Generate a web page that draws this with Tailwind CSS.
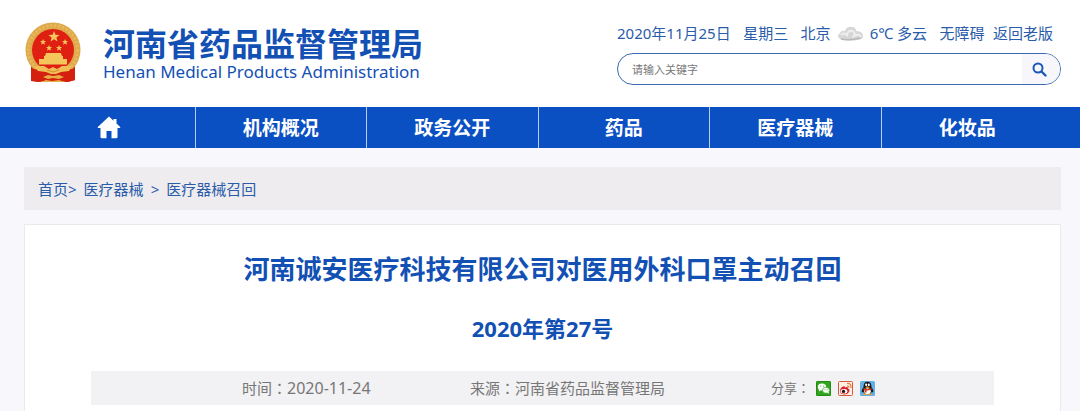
<!DOCTYPE html>
<html lang="zh-CN">
<head>
<meta charset="utf-8">
<meta name="viewport" content="width=device-width, initial-scale=1">
<title>河南省药品监督管理局</title>
<script src="https://cdn.jsdelivr.net/npm/@tailwindcss/browser@4"></script>
</head>
<body class="min-h-screen bg-[#f8f7fb] font-['Noto_Sans','Noto_Sans_CJK_SC',sans-serif] text-[15px] leading-5 text-[#2a5caa]">
<header class="flex items-start justify-between bg-white pl-6 pr-[19px] pb-[22px] pt-[22px]">
  <a href="#" class="flex items-start gap-[22px] text-[#1250b4]">
    <svg class="h-[62px] w-[57px]" viewBox="0 0 57 62" role="img" aria-label="国徽">
      <path d="M7 43 L7 59 L14 60 L22 59 L28 60 L35 59 L43 60 L51 58 L51 43Z" fill="#d3200f"/>
      <path d="M11 48l1 10M46 48l-1 10M15 50l0 9M43 50l0 9" stroke="#b3170a" stroke-width="1"/>
      <circle cx="29" cy="28" r="27.500" fill="#dfaa4c"/>
      <circle cx="29" cy="28" r="24.500" fill="none" stroke="#e8b95c" stroke-width="3" stroke-dasharray="2 2"/>
      <circle cx="29" cy="28" r="21" fill="#df1f12"/>
      <path d="M7 46q5 2 12 2h20q7 0 12-2v12l-7 2-8-1H22l-8 1-7-2z" fill="#d3200f"/>
      <g fill="#f3c55b">
        <path d="M30 9l1.500 3.800 4 .2-3.100 2.500 1.100 4-3.500-2.200-3.400 2.200 1-4-3.200-2.500 4.200-.2z"/>
        <path d="M19 17l.9 2 2.100.1-1.600 1.400.6 2.200-2-1.200-1.900 1.200.6-2.200-1.700-1.400 2.200-.1z"/>
        <path d="M41 17l.9 2 2.100.1-1.600 1.400.6 2.200-2-1.200-1.900 1.200.6-2.200-1.700-1.400 2.200-.1z"/>
        <path d="M25 23l.9 2 2.100.1-1.600 1.400.6 2.200-2-1.200-1.900 1.200.6-2.200-1.700-1.400 2.200-.1z"/>
        <path d="M35 23l.9 2 2.100.1-1.600 1.400.6 2.200-2-1.200-1.900 1.200.6-2.200-1.700-1.400 2.200-.1z"/>
        <path d="M22 31h15l1 3h-17zM20 34h19v3h-19zM15 37h28v5.500h-28z"/>
      </g>
      <path d="M10 44l10 0 5 3 4-2 4 2 5-3h10l-3 5-8 1-5 2h-5l-5-2-8-1z" fill="#f0bd57"/>
      <path d="M19 55l5-2 5 1 6-1 5 2-5 2-6-1-5 1zM17 60l5-2 6 1 7-1 6 2z" fill="#e8ae45"/>
      <path d="M23 48l6 2 6-2" fill="none" stroke="#d0902f"/>
    </svg>
    <span class="flex flex-col pt-[5px]">
      <span class="font-['Liberation_Sans','Noto_Sans_CJK_SC',sans-serif] text-[32px] font-bold leading-9">河南省药品监督管理局</span>
      <span class="text-[17px] leading-[18px]">Henan Medical Products Administration</span>
    </span>
  </a>
  <div class="flex w-[444px] flex-col gap-[10px]">
    <div class="flex items-center justify-between pr-2 pt-px">
      <span>2020年11月25日</span>
      <span>星期三</span>
      <span class="flex items-center gap-[6px]">
        <span>北京</span>
        <svg class="h-[15px] w-[27px]" viewBox="0 0 27 15" aria-hidden="true">
          <path d="M3 13q-4-3 0-6Q4 4 8 5q2-5 7-4 4 0 4 4 6 0 7 4 1 4-5 5Q10 16 3 13z" fill="#d7d7d7"/>
          <path d="M4 9q3-3 6 0 1-5 5-4t2 5q5-3 7 1" fill="none" stroke="#efefef" stroke-width="2"/>
          <path d="M4 13q8 2 20-1" fill="none" stroke="#b9b9b9" stroke-width="1.500"/>
        </svg>
        <span>6℃ 多云</span>
      </span>
      <a href="#">无障碍</a>
      <a href="#" class="-ml-1">返回老版</a>
    </div>
    <form class="flex h-8 overflow-hidden rounded-full border border-[#3a6ab4] bg-white">
      <input type="text" aria-label="搜索" placeholder="请输入关键字" class="h-full min-w-0 flex-1 bg-transparent pl-[14px] text-[11px] leading-5 outline-none placeholder:text-[#777777]">
      <button type="button" aria-label="搜索" class="flex w-[38px] items-center bg-[#f7f7fb] pl-[10px] text-[#1d56b3]">
        <svg class="size-[15px]" viewBox="0 0 15 15" fill="none" stroke="currentColor"><circle cx="6" cy="6" r="4.500" stroke-width="2"/><path d="M9.500 9.500l4 4" stroke-width="2.400" stroke-linecap="round"/></svg>
      </button>
    </form>
  </div>
</header>
<nav class="bg-[#0b50c2] pl-6 pr-[27px] text-[19px] font-bold text-white">
  <div class="grid h-[41px] grid-cols-6 divide-x divide-[#b5cdf4]">
    <a href="#" aria-label="首页" class="flex items-center justify-center"><svg class="h-[23px] w-6" viewBox="0 0 24 23" fill="currentColor"><path d="M12 0.500L0.800 11q-.5 1 .6 1H3.500v9q0 1.300 1.300 1.300H9.500V15h5v7.300h4.700q1.300 0 1.300-1.300V12h2.100q1.100 0 .6-1L19.500 7.500V3h-3v1.800z"/></svg></a>
    <a href="#" class="flex items-center justify-center">机构概况</a>
    <a href="#" class="flex items-center justify-center">政务公开</a>
    <a href="#" class="flex items-center justify-center">药品</a>
    <a href="#" class="flex items-center justify-center">医疗器械</a>
    <a href="#" class="flex items-center justify-center">化妆品</a>
  </div>
</nav>
<main class="flex flex-col gap-[14px] pl-6 pr-[19px] pt-[19px]">
  <div class="flex h-[43px] items-center gap-[7px] bg-[#eeecef] px-[14px]">
    <span><a href="#">首页</a>&gt;</span>
    <a href="#">医疗器械</a>
    <span>&gt;</span>
    <a href="#">医疗器械召回</a>
  </div>
  <article class="border border-b-0 border-[#eae9ee] bg-white px-[66px] pb-[7px] pt-[28px]">
    <h1 class="text-center text-[26px] font-bold leading-8 text-[#1250b4]">河南诚安医疗科技有限公司对医用外科口罩主动召回</h1>
    <p class="mt-[29px] text-center text-[22px] font-bold leading-7 text-[#1250b4]">2020年第27号</p>
    <div class="mt-[29px] flex h-[34px] items-center bg-[#f2f1f3] pl-[151px] text-[#777777]">
      <span class="w-[228px]">时间<span lang="zh-TW" class="font-['Noto_Sans_CJK_TC']">：</span><span class="text-[16px]">2020-11-24</span></span>
      <span class="w-[301px]">来源<span lang="zh-TW" class="font-['Noto_Sans_CJK_TC']">：</span>河南省药品监督管理局</span>
      <span class="flex items-center gap-[7px]">
        <span class="w-[38px] whitespace-nowrap text-[13px]">分享<span lang="zh-TW" class="font-['Noto_Sans_CJK_TC']">：</span></span>
        <button type="button" aria-label="微信"><svg class="size-[15px]" viewBox="0 0 15 15"><rect width="15" height="15" rx="1.500" fill="#2fa51e"/><rect x=".5" y=".5" width="14" height="14" rx="1" fill="none" stroke="#258b17"/><ellipse cx="6" cy="6" rx="4.200" ry="3.500" fill="#fff"/><path d="M3 8l0 2.500 2-1.500z" fill="#fff"/><ellipse cx="10" cy="9.300" rx="3.500" ry="3" fill="#fff" stroke="#2fa51e" stroke-width=".7"/><path d="M11 11.500l2 1.300-.4-2z" fill="#fff"/><g fill="#2fa51e"><circle cx="4.600" cy="5" r=".6"/><circle cx="7.400" cy="5" r=".6"/><circle cx="9" cy="8.700" r=".5"/><circle cx="11.200" cy="8.700" r=".5"/></g></svg></button>
        <button type="button" aria-label="微博"><svg class="size-[15px]" viewBox="0 0 15 15"><rect x=".5" y=".5" width="14" height="14" rx="1" fill="#fff0e6" stroke="#d8593a"/><path d="M2 10Q2 7 5 5.500q2-.8 2 .9 3-1 3 1 2 .6 1.500 2.600Q10 13.500 6 13.500 2 13 2 10z" fill="#d9232b"/><ellipse cx="6" cy="10.200" rx="3.300" ry="2.300" fill="#fff"/><circle cx="5.500" cy="10.400" r="1.700" fill="#221818"/><path d="M9 2.500q4.500-.5 4 4.500M9 4.800q2.200 0 2 2" fill="none" stroke="#ec7b34" stroke-width="1.200"/></svg></button>
        <button type="button" aria-label="QQ"><svg class="size-[15px]" viewBox="0 0 15 15"><rect width="15" height="15" rx="1.500" fill="#62b0e5"/><path d="M3.500 6Q3.500.8 7.500.8T11.500 6q2.500 3.500 1.500 5.500l-1.300-.8Q11 13.500 7.500 13.500T3.300 10.700L2 11.500Q1 9.500 3.500 6z" fill="#18181d"/><ellipse cx="7.500" cy="10.300" rx="3.300" ry="3.100" fill="#fff"/><ellipse cx="6.200" cy="3.800" rx="1" ry="1.400" fill="#fff"/><ellipse cx="8.800" cy="3.800" rx="1" ry="1.400" fill="#fff"/><path d="M5 6q2.500-1 5 0-2.500 1.800-5 0z" fill="#f2a51c"/><path d="M3.400 7q4 2 8.200 0v1.600q-2.600 1-5 .9v2H4.800V9.200l-1.400-.6z" fill="#e03a1e"/><path d="M3 13.500q2-1.500 4 0zM8 13.500q2-1.500 4 0z" fill="#f2a51c" stroke="#f2a51c" stroke-width=".6"/></svg></button>
      </span>
    </div>
  </article>
</main>
</body>
</html>
